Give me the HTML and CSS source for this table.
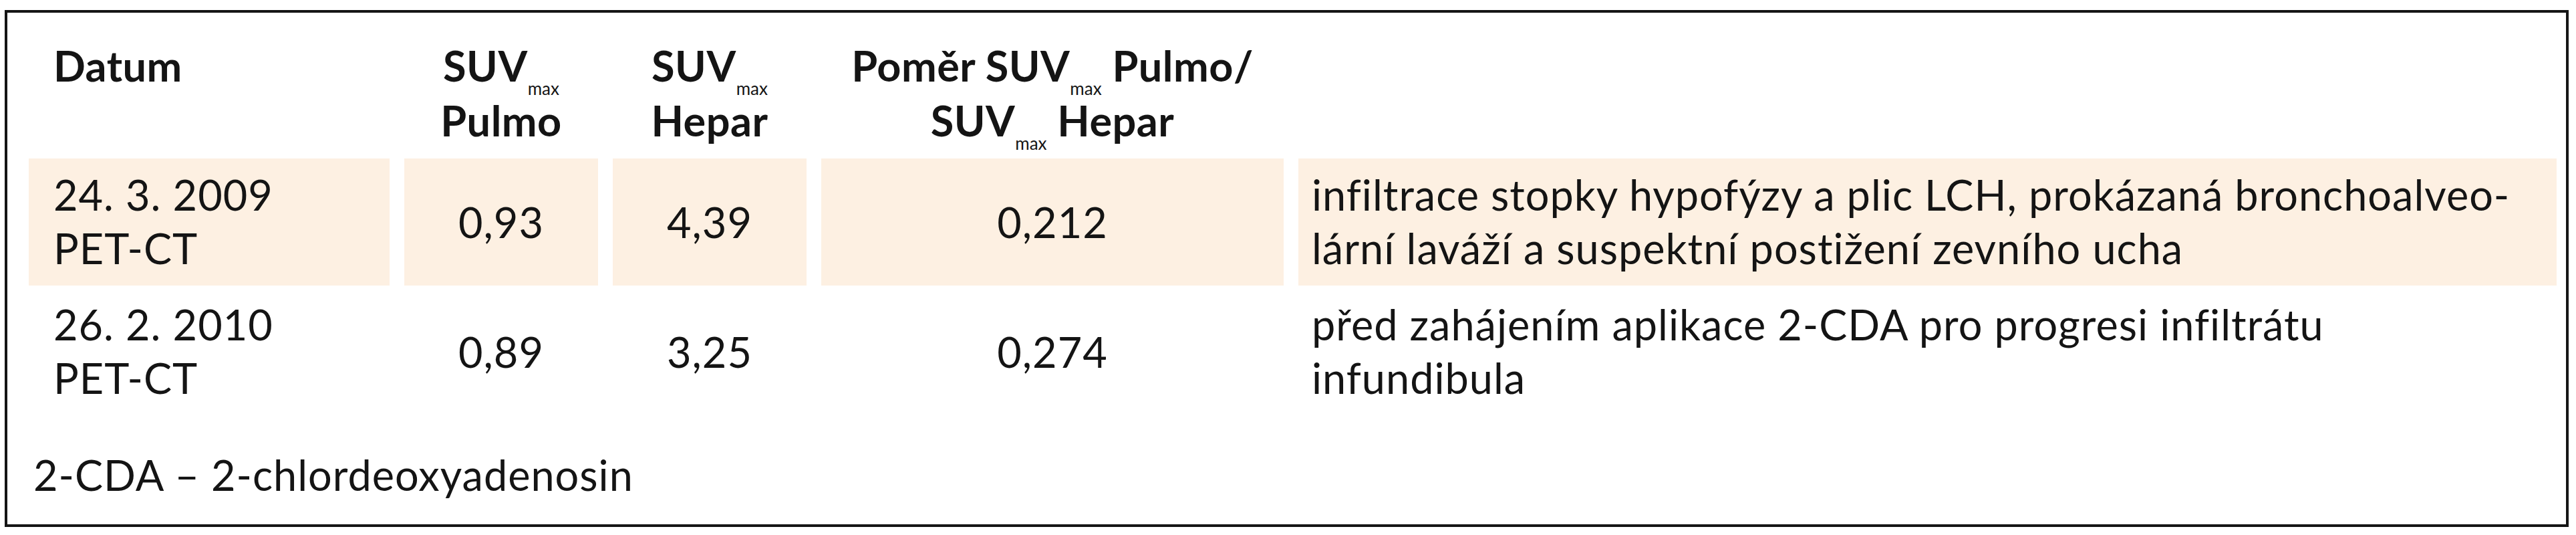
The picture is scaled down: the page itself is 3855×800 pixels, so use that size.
FILE: index.html
```html
<!DOCTYPE html>
<html lang="cs">
<head>
<meta charset="utf-8">
<title>Tabulka SUVmax</title>
<link rel="stylesheet" href="styles.css">
</head>
<body>
<div class="box">
  <div class="grid">
    <div class="cell head c1">Datum</div>
    <div class="cell head center">SUV<sub>max</sub><br>Pulmo</div>
    <div class="cell head center">SUV<sub>max</sub><br>Hepar</div>
    <div class="cell head center">Poměr SUV<sub>max</sub> Pulmo/<br>SUV<sub>max</sub> Hepar</div>
    <div class="cell head"></div>

    <div class="cell hl c1">24. 3. 2009<br>PET-CT</div>
    <div class="cell hl center mid">0,93</div>
    <div class="cell hl center mid">4,39</div>
    <div class="cell hl center mid">0,212</div>
    <div class="cell hl c5">infiltrace stopky hypofýzy a plic LCH, prokázaná bronchoalveo-<br>lární laváží a suspektní postižení zevního ucha</div>

    <div class="cell c1">26. 2. 2010<br>PET-CT</div>
    <div class="cell center mid">0,89</div>
    <div class="cell center mid">3,25</div>
    <div class="cell center mid">0,274</div>
    <div class="cell c5">před zahájením aplikace 2-CDA pro progresi infiltrátu<br>infundibula</div>
  </div>
  <p class="note">2-CDA – 2-chlordeoxyadenosin</p>
</div>
</body>
</html>
```

FILE: styles.css
```css
html, body {
  margin: 0;
  padding: 0;
  background: #ffffff;
}

body {
  padding: 15px 0 0 7px;
  font-family: Lato, "Open Sans", "Liberation Sans", sans-serif;
  color: #141414;
}

.box {
  box-sizing: border-box;
  width: 3837px;
  height: 773px;
  border: 4px solid #151515;
  padding: 24px 0 0 32px;
}

.grid {
  display: grid;
  grid-template-columns: 540px 290px 290px 692px 1883px;
  grid-auto-rows: 190px;
  column-gap: 22px;
  row-gap: 4px;
}

.cell {
  box-sizing: border-box;
  padding: 14px 0 0 0;
  font-size: 63px;
  line-height: 80px;
  letter-spacing: 1px;
  white-space: nowrap;
}

.head {
  font-weight: 700;
  line-height: 82px;
  letter-spacing: 0.5px;
}

.hl {
  background: #fdf0e2;
}

.c1 {
  padding-left: 37px;
}

.c5 {
  padding-left: 20px;
}

.center {
  text-align: center;
}

.mid {
  display: flex;
  align-items: center;
  justify-content: center;
  padding-top: 0;
}

sub {
  font-size: 26px;
  font-weight: 400;
  line-height: 0;
  vertical-align: -20px;
  letter-spacing: 0;
}

.note {
  margin: 49px 0 0 7px;
  font-size: 63px;
  line-height: 80px;
  letter-spacing: 1px;
}
```
